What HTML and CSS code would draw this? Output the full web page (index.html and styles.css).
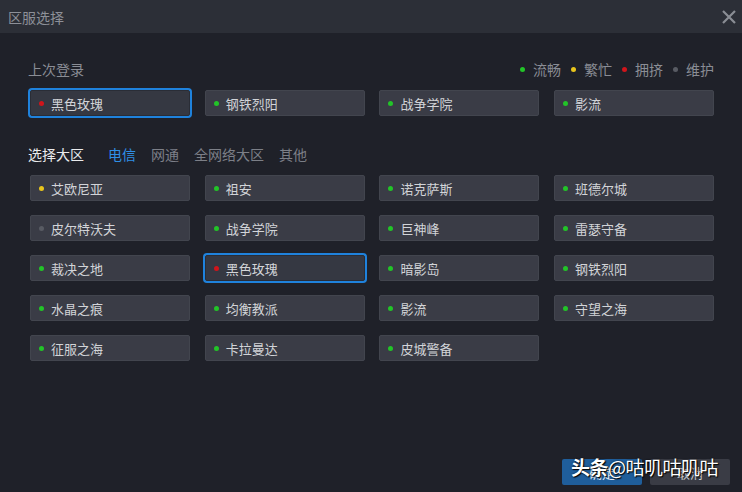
FILE: index.html
```html
<!doctype html>
<html>
<head>
  <meta charset="UTF-8" />
  <title>区服选择</title>
  <link rel="stylesheet" href="styles.css">
</head>
<body>
  <div id="dialog">
    <div class="titlebar">
      <span class="title">区服选择</span>
      <span class="close">
        <svg width="14" height="14" viewBox="0 0 14 14"><path d="M1 1 L13 13 M13 1 L1 13" stroke="#8a8d94" stroke-width="2.2" fill="none"/></svg>
      </span>
    </div>

    <div class="content">
      <div class="headrow">
        <span class="label">上次登录</span>
        <ul class="legend">
          <li><i class="dot green"></i>流畅</li>
          <li><i class="dot yellow"></i>繁忙</li>
          <li><i class="dot red"></i>拥挤</li>
          <li><i class="dot grey"></i>维护</li>
        </ul>
      </div>
      <div class="servers recent">
        <div class="server selected"><i class="dot red"></i>黑色玫瑰</div>
        <div class="server"><i class="dot green"></i>钢铁烈阳</div>
        <div class="server"><i class="dot green"></i>战争学院</div>
        <div class="server"><i class="dot green"></i>影流</div>
      </div>

      <div class="headrow tabsrow">
        <span class="label strong">选择大区</span>
        <ul class="tabs">
          <li class="active">电信</li>
          <li>网通</li>
          <li>全网络大区</li>
          <li>其他</li>
        </ul>
      </div>
      <div class="servers">
        <div class="server"><i class="dot yellow"></i>艾欧尼亚</div>
        <div class="server"><i class="dot green"></i>祖安</div>
        <div class="server"><i class="dot green"></i>诺克萨斯</div>
        <div class="server"><i class="dot green"></i>班德尔城</div>
        <div class="server"><i class="dot grey"></i>皮尔特沃夫</div>
        <div class="server"><i class="dot green"></i>战争学院</div>
        <div class="server"><i class="dot green"></i>巨神峰</div>
        <div class="server"><i class="dot green"></i>雷瑟守备</div>
        <div class="server"><i class="dot green"></i>裁决之地</div>
        <div class="server selected"><i class="dot red"></i>黑色玫瑰</div>
        <div class="server"><i class="dot green"></i>暗影岛</div>
        <div class="server"><i class="dot green"></i>钢铁烈阳</div>
        <div class="server"><i class="dot green"></i>水晶之痕</div>
        <div class="server"><i class="dot green"></i>均衡教派</div>
        <div class="server"><i class="dot green"></i>影流</div>
        <div class="server"><i class="dot green"></i>守望之海</div>
        <div class="server"><i class="dot green"></i>征服之海</div>
        <div class="server"><i class="dot green"></i>卡拉曼达</div>
        <div class="server"><i class="dot green"></i>皮城警备</div>
      </div>
    </div>

    <div class="footer">
      <button class="btn primary">确定</button>
      <button class="btn">取消</button>
      <div class="watermark"><b>头条</b>@咕叽咕叽咕</div>
    </div>
  </div>
</body>
</html>
```

FILE: styles.css
```css
html, body {
  margin: 0;
  padding: 0;
  background: #1f2129;
  font-family: "Noto Sans CJK SC", "Noto Sans", sans-serif;
  color: #cfd1d5;
}
#dialog {
  height: 492px;
  display: flex;
  flex-direction: column;
  overflow: hidden;
}
.titlebar {
  height: 33px;
  background: #2c2f37;
  display: flex;
  align-items: center;
  justify-content: space-between;
  padding: 0 6px 0 8px;
}
.title {
  font-size: 14px;
  color: #8d9098;
}
.close {
  display: flex;
  width: 14px;
  height: 14px;
}
.content {
  padding: 26px 28px 0 28px;
}
ul {
  list-style: none;
  margin: 0;
  padding: 0;
}
.headrow {
  display: flex;
  align-items: center;
  justify-content: space-between;
  height: 20px;
  font-size: 14px;
  line-height: 20px;
}
.label {
  color: #8a8d95;
}
.label.strong {
  color: #e9eaec;
}
.legend {
  display: flex;
  gap: 10px;
  color: #8a8d95;
}
.legend li {
  display: flex;
  align-items: center;
  gap: 8px;
}
.dot {
  display: inline-block;
  width: 5px;
  height: 5px;
  border-radius: 50%;
}
.dot.green { background: #22c428; }
.dot.yellow { background: #e8c51c; }
.dot.red { background: #d0151b; }
.dot.grey { background: #585b63; }
.servers {
  display: grid;
  grid-template-columns: repeat(4, 160px);
  column-gap: 14.7px;
  row-gap: 14px;
  padding-left: 2px;
  margin-top: 11px;
}
.server {
  height: 26px;
  box-sizing: border-box;
  background: #3a3c46;
  border: 1px solid #42454e;
  border-radius: 2px;
  display: flex;
  align-items: center;
  gap: 7px;
  padding-left: 8px;
  font-size: 13px;
  color: #d2d4d8;
}
.server.selected {
  box-shadow: 0 0 0 2px #1f82dc;
  border-color: #2a2d36;
  background: #353842;
}
.tabsrow {
  justify-content: flex-start;
  margin-top: 28px;
}
.tabs {
  display: flex;
  gap: 15px;
  margin-left: 24px;
  color: #7c7f87;
}
.tabs .active {
  color: #2f8fe6;
}
.footer {
  margin-top: auto;
  display: flex;
  justify-content: flex-end;
  gap: 8px;
  padding: 0 12px 7px 0;
  position: relative;
}
.btn {
  width: 80px;
  height: 26px;
  border: none;
  border-radius: 2px;
  background: #3a3c45;
  color: #c9cbcf;
  font-family: inherit;
  font-size: 13px;
}
.btn.primary {
  background: #1f5e9b;
  color: #e8eef5;
}
.watermark {
  position: absolute;
  left: 571px;
  top: -6px;
  font-size: 19px;
  color: #fff;
  text-shadow: 1px 1px 1px #000, 0 0 2px rgba(0,0,0,0.8);
  white-space: nowrap;
  letter-spacing: -0.5px;
}
.watermark b {
  font-weight: bold;
}
```
